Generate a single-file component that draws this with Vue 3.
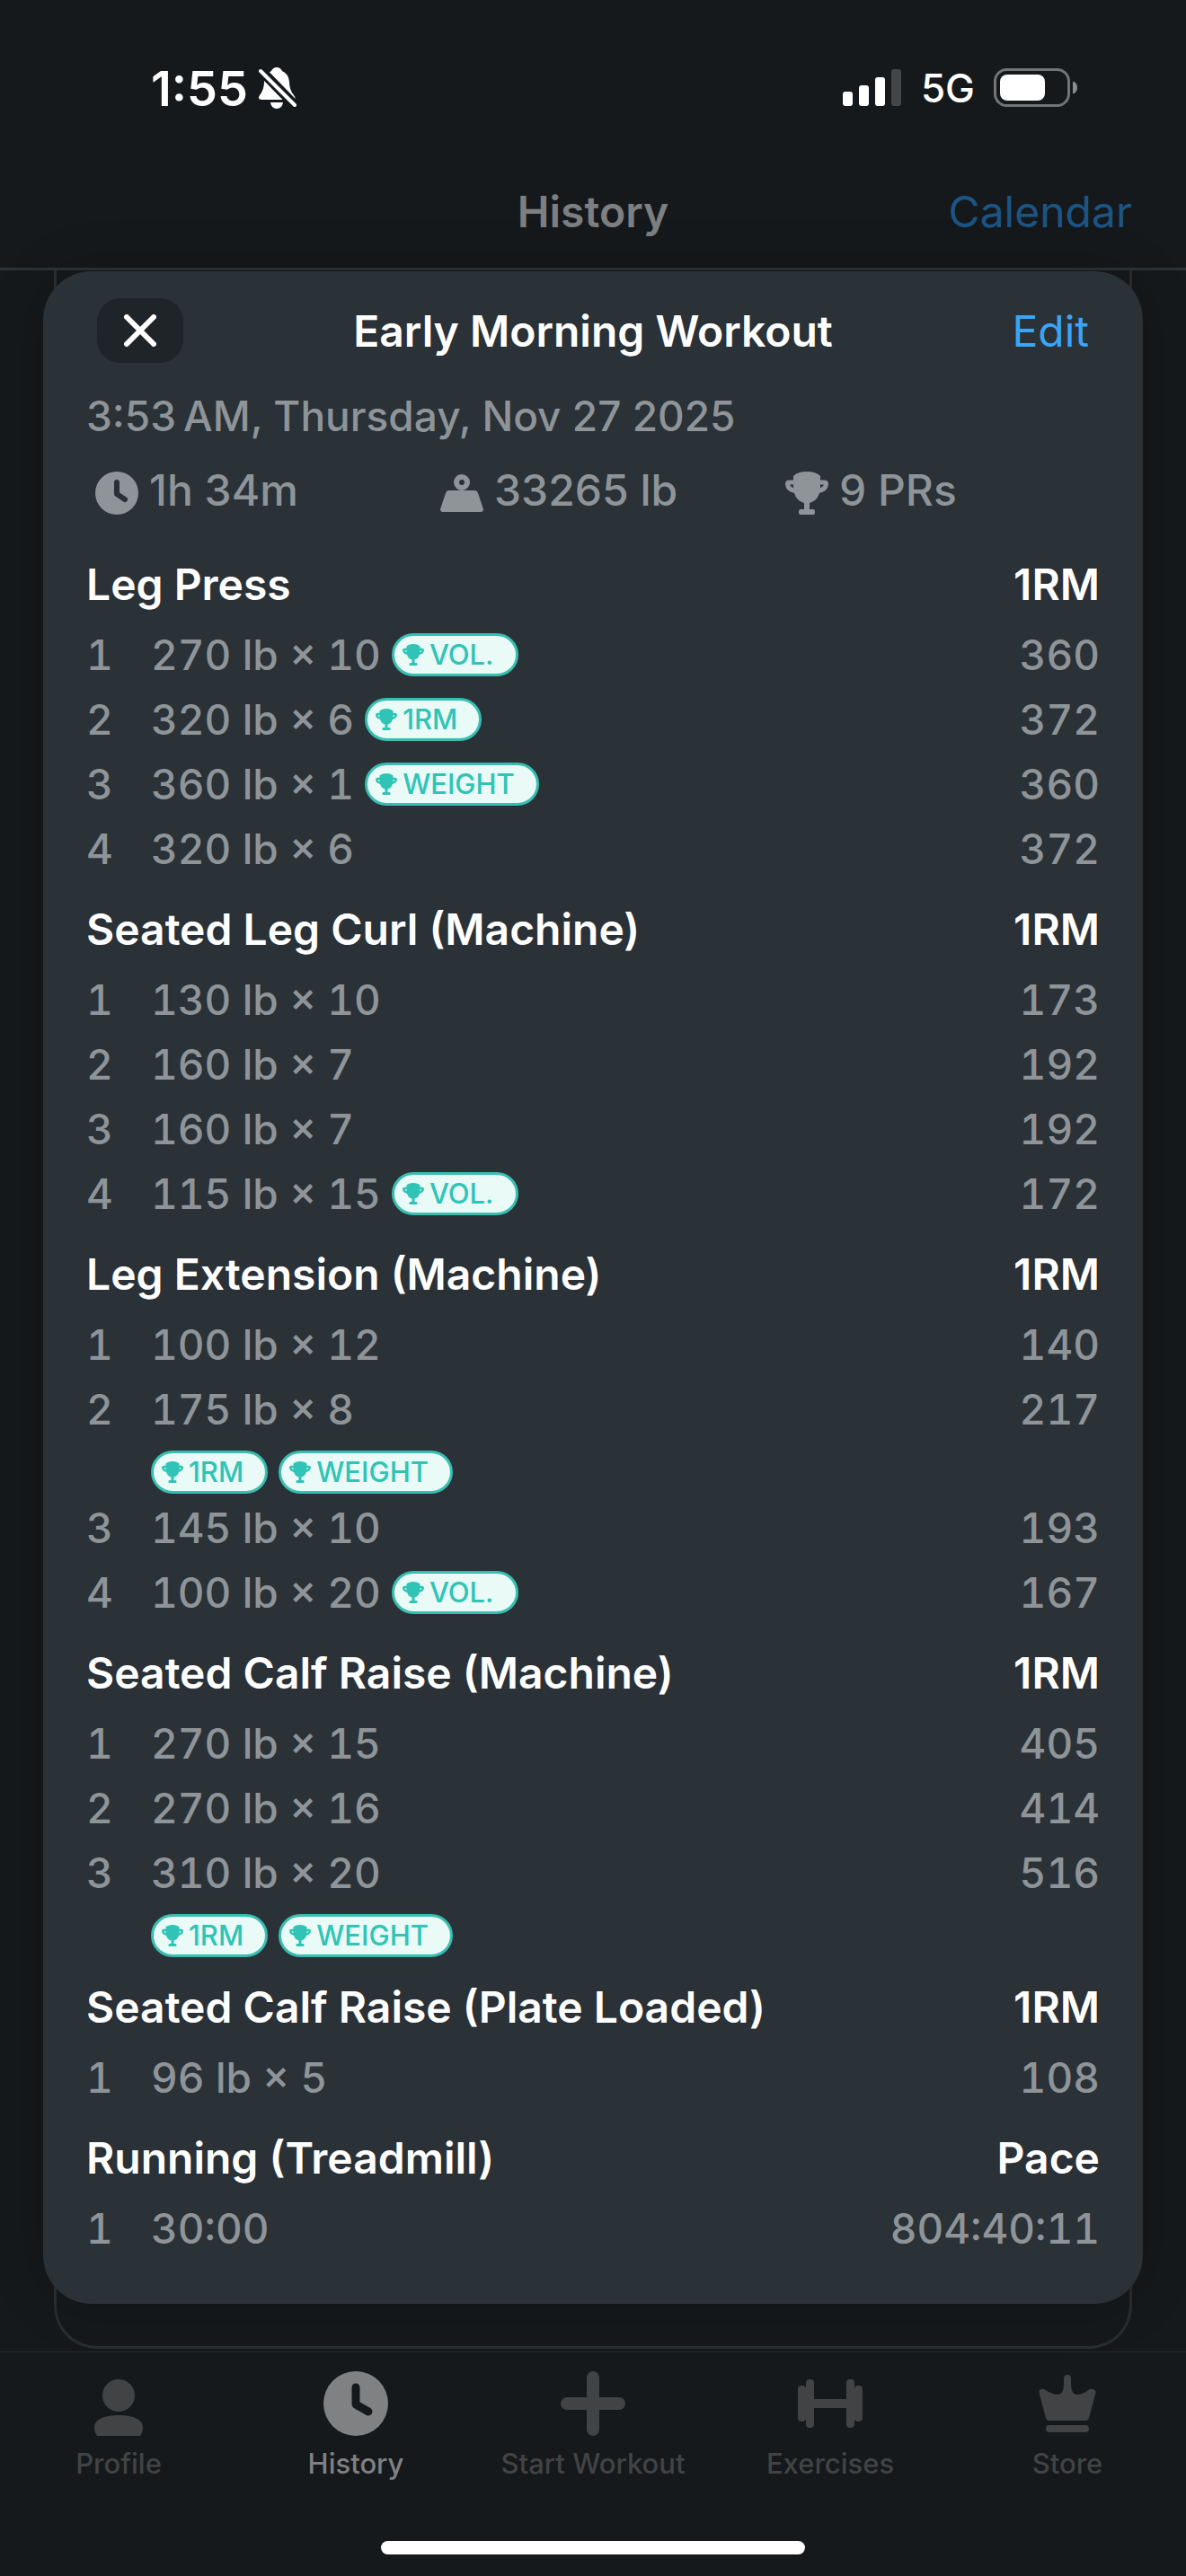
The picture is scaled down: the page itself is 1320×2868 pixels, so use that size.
<script setup>
const stats = [
  { icon: 'clock', text: '1h 34m' },
  { icon: 'weight', text: '33265 lb' },
  { icon: 'trophy', text: '9 PRs' },
]

const exercises = [
  {
    name: 'Leg Press',
    metric: '1RM',
    sets: [
      { text: '270 lb × 10', value: '360', badges: ['VOL.'] },
      { text: '320 lb × 6', value: '372', badges: ['1RM'] },
      { text: '360 lb × 1', value: '360', badges: ['WEIGHT'] },
      { text: '320 lb × 6', value: '372', badges: [] },
    ],
  },
  {
    name: 'Seated Leg Curl (Machine)',
    metric: '1RM',
    sets: [
      { text: '130 lb × 10', value: '173', badges: [] },
      { text: '160 lb × 7', value: '192', badges: [] },
      { text: '160 lb × 7', value: '192', badges: [] },
      { text: '115 lb × 15', value: '172', badges: ['VOL.'] },
    ],
  },
  {
    name: 'Leg Extension (Machine)',
    metric: '1RM',
    sets: [
      { text: '100 lb × 12', value: '140', badges: [] },
      { text: '175 lb × 8', value: '217', badges: ['1RM', 'WEIGHT'] },
      { text: '145 lb × 10', value: '193', badges: [] },
      { text: '100 lb × 20', value: '167', badges: ['VOL.'] },
    ],
  },
  {
    name: 'Seated Calf Raise (Machine)',
    metric: '1RM',
    sets: [
      { text: '270 lb × 15', value: '405', badges: [] },
      { text: '270 lb × 16', value: '414', badges: [] },
      { text: '310 lb × 20', value: '516', badges: ['1RM', 'WEIGHT'] },
    ],
  },
  {
    name: 'Seated Calf Raise (Plate Loaded)',
    metric: '1RM',
    sets: [{ text: '96 lb × 5', value: '108', badges: [] }],
  },
  {
    name: 'Running (Treadmill)',
    metric: 'Pace',
    sets: [{ text: '30:00', value: '804:40:11', badges: [] }],
  },
]

const tabs = [
  { icon: 'profile', label: 'Profile' },
  { icon: 'history', label: 'History', active: true },
  { icon: 'plus', label: 'Start Workout' },
  { icon: 'dumbbell', label: 'Exercises' },
  { icon: 'crown', label: 'Store' },
]
</script>

<template>
  <div class="screen">
    <svg class="defs" width="0" height="0" aria-hidden="true">
      <symbol id="trophy" viewBox="0 0 48 48">
        <path d="M9 5Q14 0 24 0Q34 0 39 5V18Q38 32 27 35V42H31Q33 42 33 45Q33 48 31 48H17Q15 48 15 45Q15 42 17 42H21V35Q10 32 9 18Z" fill="currentColor" />
        <path d="M10 12H4.500Q2.500 12 2.500 14Q3 20 11 21.500M38 12H43.500Q45.500 12 45.500 14Q45 20 37 21.500" fill="none" stroke="currentColor" stroke-width="5" />
      </symbol>
    </svg>

    <div class="status">
      <div class="status-left">
        <span class="time">1:55</span>
        <svg width="42" height="46" viewBox="0 0 42 46" aria-label="Silent mode">
          <path d="M20 0Q24 0 26 4Q33 7 34 16Q34 25 39 31Q43 36 37 36H4Q-2 36 1 31Q6 25 6 16Q7 7 14 4Q16 0 20 0ZM13 39H27Q26 46 20 46Q14 46 13 39Z" fill="#fff" />
          <path d="M1 2L41 43" stroke="#15191c" stroke-width="11" />
          <path d="M2 4L40 42" stroke="#fff" stroke-width="4" stroke-linecap="round" />
        </svg>
      </div>
      <div class="status-right">
        <svg width="66" height="42" viewBox="0 0 66 42" aria-label="Signal">
          <g fill="#fff">
            <rect x="0" y="25" width="11" height="16" rx="3" />
            <rect x="18" y="18" width="11" height="23" rx="3" />
            <rect x="36" y="9" width="11" height="32" rx="3" />
            <rect x="54" y="0" width="11" height="41" rx="3" fill="#434648" />
          </g>
        </svg>
        <span class="network">5G</span>
        <svg width="94" height="44" viewBox="0 0 94 44" aria-label="Battery">
          <rect x="1.500" y="1.500" width="82" height="40" rx="13" fill="none" stroke="#727477" stroke-width="3" />
          <rect x="7" y="7" width="50" height="29" rx="8" fill="#fff" />
          <path d="M88 14.500Q93 16 93 21.500Q93 27 88 28.500Z" fill="#8a8c8e" />
        </svg>
      </div>
    </div>

    <header class="nav">
      <h1>History</h1>
      <button class="calendar" type="button">Calendar</button>
    </header>

    <main class="frame">
      <section class="sheet" role="dialog" aria-labelledby="workout-title">
        <div class="sheet-head">
          <button class="close" type="button" aria-label="Close">
            <svg width="36" height="36" viewBox="0 0 36 36">
              <path d="M3 3L33 33M33 3L3 33" stroke="#fff" stroke-width="6" stroke-linecap="round" />
            </svg>
          </button>
          <h2 id="workout-title">Early Morning Workout</h2>
          <button class="edit" type="button">Edit</button>
        </div>

        <p class="date">3:53&#8239;AM, Thursday, Nov 27 2025</p>

        <ul class="stats">
          <li v-for="stat in stats" :key="stat.icon">
            <svg v-if="stat.icon === 'clock'" width="48" height="48" viewBox="0 0 48 48">
              <circle cx="24" cy="24" r="24" fill="currentColor" />
              <path d="M24 12V25L33 31" fill="none" stroke="#2a3136" stroke-width="6" stroke-linecap="round" stroke-linejoin="round" />
            </svg>
            <svg v-else-if="stat.icon === 'weight'" width="48" height="48" viewBox="0 0 48 48">
              <circle cx="24" cy="12" r="6" fill="none" stroke="currentColor" stroke-width="6" />
              <path d="M10 21H38Q41 21 42 24L48 42Q48 45 45 45H3Q0 45 0 42L6 24Q7 21 10 21Z" fill="currentColor" />
            </svg>
            <svg v-else width="48" height="48"><use href="#trophy" /></svg>
            <span>{{ stat.text }}</span>
          </li>
        </ul>

        <table v-for="exercise in exercises" :key="exercise.name">
          <colgroup>
            <col class="col-index" />
            <col />
            <col class="col-value" />
          </colgroup>
          <thead>
            <tr>
              <th colspan="2" scope="col">{{ exercise.name }}</th>
              <th class="value" scope="col">{{ exercise.metric }}</th>
            </tr>
          </thead>
          <tbody>
            <tr v-for="(set, i) in exercise.sets" :key="i">
              <td>{{ i + 1 }}</td>
              <td>
                <div class="set">
                  <span>{{ set.text }}</span>
                  <div v-if="set.badges.length" class="badges" :class="{ below: set.badges.length > 1 }">
                    <span v-for="badge in set.badges" :key="badge" class="badge">
                      <svg width="24" height="24"><use href="#trophy" /></svg>{{ badge }}
                    </span>
                  </div>
                </div>
              </td>
              <td class="value">{{ set.value }}</td>
            </tr>
          </tbody>
        </table>
      </section>
    </main>

    <nav class="tabs">
      <button v-for="tab in tabs" :key="tab.label" type="button" :class="{ active: tab.active }">
        <svg width="72" height="72" viewBox="0 0 72 72" fill="currentColor">
          <g v-if="tab.icon === 'profile'">
            <circle cx="36" cy="27" r="18" />
            <path d="M12 72Q9 68 9 63C9 54 19 49 36 49C53 49 63 54 63 63Q63 68 60 72Z" />
          </g>
          <g v-else-if="tab.icon === 'history'">
            <circle cx="36" cy="36" r="36" />
            <path d="M36 18V37L50 45" fill="none" stroke="#15191c" stroke-width="9" stroke-linecap="round" stroke-linejoin="round" />
          </g>
          <g v-else-if="tab.icon === 'plus'">
            <rect x="29" y="0" width="14" height="72" rx="7" />
            <rect x="0" y="29" width="72" height="14" rx="7" />
          </g>
          <g v-else-if="tab.icon === 'dumbbell'">
            <rect x="0" y="16" width="9" height="40" rx="4" />
            <rect x="9" y="9" width="9" height="54" rx="4" />
            <rect x="54" y="9" width="9" height="54" rx="4" />
            <rect x="63" y="16" width="9" height="40" rx="4" />
            <rect x="6" y="18" width="6" height="36" />
            <rect x="60" y="18" width="6" height="36" />
            <rect x="17" y="31" width="38" height="10" />
          </g>
          <g v-else>
            <path d="M32 8Q32 4 36 4Q40 4 40 8V14Q40 25 46 26Q53 26 61 20Q65 19 67.500 22Q68 23 67 26L60 52Q59 55 56 55H16Q13 55 12 52L5 26Q4 23 5 21Q7 19 10 20Q19 26 26 26Q32 25 32 14Z" />
            <rect x="12" y="60" width="48" height="8" rx="4" />
          </g>
        </svg>
        <span>{{ tab.label }}</span>
      </button>
    </nav>
    <div class="home"></div>
  </div>
</template>

<style>
body {
  margin: 0;
  background: #15191c;
}
</style>

<style scoped>
.screen {
  min-height: 100vh;
  display: flex;
  flex-direction: column;
  overflow: hidden;
  background: #15191c;
  font-family: Inter, "Liberation Sans", sans-serif;
  font-size: 48px;
  font-weight: 500;
  color: #8e9498;
}
.defs {
  position: absolute;
}
svg {
  display: block;
  flex: none;
}
button {
  border: 0;
  padding: 0;
  margin: 0;
  background: none;
  font: inherit;
  color: inherit;
}
h1,
h2,
p,
ul {
  margin: 0;
  padding: 0;
}

.status {
  height: 196px;
  box-sizing: border-box;
  padding: 0 120px 0 168px;
  display: flex;
  justify-content: space-between;
  align-items: center;
  color: #fff;
}
.status-left,
.status-right {
  display: flex;
  align-items: center;
}
.status-left {
  gap: 12px;
}
.status-right {
  gap: 21px;
}
.time {
  font-size: 54px;
  font-weight: 600;
}
.network {
  font-size: 44px;
}

.nav {
  height: 105px;
  box-sizing: border-box;
  padding: 0 60px 22px;
  display: grid;
  grid-template-columns: 1fr auto 1fr;
  align-items: center;
  border-bottom: 3px solid #2c3235;
}
.nav h1 {
  grid-column: 2;
  font-size: 48px;
  font-weight: 600;
  line-height: 60px;
  color: #7d7f81;
}
.calendar {
  justify-self: end;
  font-weight: 400;
  line-height: 60px;
  color: #1c5583;
}

.frame {
  margin: 0 60px;
  padding: 1px 0 47px;
  border: solid #292e30;
  border-width: 0 3px 3px;
  border-radius: 0 0 48px 48px;
}
.sheet {
  margin: 0 -15px;
  padding: 0 48px 48px;
  border-radius: 54px;
  background: #2a3137;
  box-shadow: 0 0 60px rgba(0, 0, 0, 0.2);
}
.sheet-head {
  height: 132px;
  padding: 0 12px;
  display: grid;
  grid-template-columns: 1fr auto 1fr;
  align-items: center;
}
.close {
  width: 96px;
  height: 72px;
  border-radius: 26px;
  background: #1f2428;
  display: flex;
  align-items: center;
  justify-content: center;
}
h2 {
  font-size: 48px;
  font-weight: 600;
  color: #fff;
}
.edit {
  justify-self: end;
  font-weight: 400;
  color: #3ba5f5;
}
.date {
  font-size: 46px;
  line-height: 58px;
}
.stats {
  display: grid;
  grid-template-columns: 384px 384px 1fr;
  padding: 33px 0 24px 10px;
  list-style: none;
}
.stats li {
  display: flex;
  gap: 12px;
  line-height: 42px;
  white-space: nowrap;
}

table {
  width: 100%;
  table-layout: fixed;
  border-collapse: collapse;
  line-height: 72px;
}
.col-index {
  width: 72px;
}
.col-value {
  width: 280px;
}
th {
  padding: 18px 0 6px;
  text-align: left;
  font-weight: 600;
  color: #fff;
}
td {
  padding: 0;
  vertical-align: top;
  font-size: 46px;
  font-variant-numeric: tabular-nums;
}
.value {
  text-align: right;
}
.set {
  display: flex;
  flex-wrap: wrap;
  align-items: center;
}
.badges {
  display: flex;
  gap: 12px;
  margin-left: 12px;
}
.badges.below {
  width: 100%;
  margin: 10px 0 2px;
}
.badge {
  height: 48px;
  box-sizing: border-box;
  padding: 0 24px 0 9px;
  display: flex;
  align-items: center;
  gap: 6px;
  border: 3px solid #38beb1;
  border-radius: 24px;
  background: #e9faf7;
  font-size: 31px;
  line-height: 42px;
  font-variant-numeric: normal;
  color: #2fc4b6;
}

.tabs {
  margin-top: 3px;
  padding-top: 21px;
  display: grid;
  grid-template-columns: repeat(5, 1fr);
  border-top: 1px solid #24292b;
  color: #424344;
}
.tabs button {
  display: flex;
  flex-direction: column;
  align-items: center;
  gap: 12px;
  font-size: 31px;
  line-height: 38px;
}
.tabs .active {
  color: #808182;
}
.home {
  width: 472px;
  height: 15px;
  margin: auto auto 24px;
  border-radius: 8px;
  background: #fff;
}
</style>
